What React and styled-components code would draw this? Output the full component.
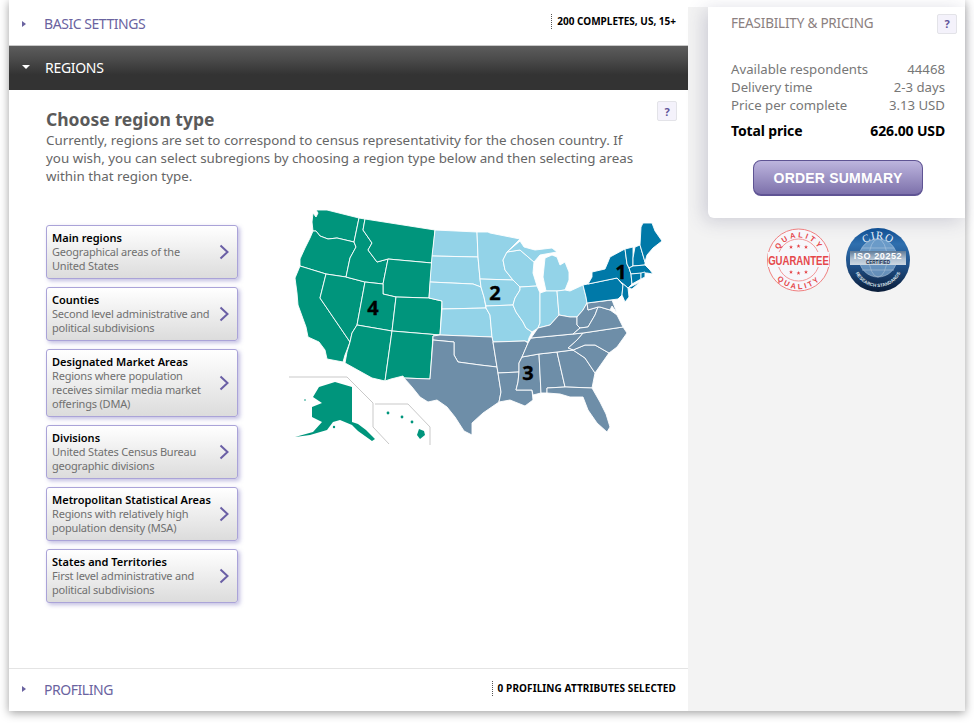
import React from 'react'
import styled, { createGlobalStyle } from 'styled-components'

const FONT = `"Noto Sans", "Open Sans", sans-serif`

const Global = createGlobalStyle`
  html, body { margin: 0; padding: 0; background: #fff; }
  body { font-family: ${FONT}; width: 974px; height: 723px; overflow: hidden; }
  * { box-sizing: border-box; }
`

const Shell = styled.div`
  margin-left: 9px;
  width: 956px;
  height: 711px;
  display: flex;
  background: #f3f3f3;
  box-shadow: 0 2px 9px rgba(0, 0, 0, 0.38);
`
const MainPanel = styled.div`
  width: 679px;
  display: flex;
  flex-direction: column;
  background: #fff;
`
const SidePanel = styled.div`
  width: 277px;
  background: #f3f3f3;
  display: flex;
  flex-direction: column;
  align-items: flex-end;
  border-top: 7px solid #fff;
`
const SectionHead = styled.div`
  height: ${p => p.$h}px;
  flex: none;
  display: flex;
  align-items: center;
  padding: ${p => (p.$ruled ? '0 12px 2px 13px' : '2px 12px 0 13px')};
  border-top: ${p => (p.$ruled ? '1px solid #e4e4e4' : 'none')};
  color: #6a63a0;
  font-size: 14px;
  letter-spacing: -0.45px;
`
const DarkHead = styled.div`
  height: 45px;
  flex: none;
  display: flex;
  align-items: center;
  padding: 0 13px 2px;
  color: #fff;
  font-size: 14px;
  letter-spacing: -0.3px;
  border-top: 1px solid #c9c9c9;
  background: linear-gradient(#5c5c5c 0%, #4b4b4b 30%, #333 65%, #333 100%);
`
const Arrow = styled.span`
  width: 0;
  height: 0;
  margin-right: 18px;
  border-top: 3px solid transparent;
  border-bottom: 3px solid transparent;
  border-left: 4px solid #6a63a0;
`
const ArrowDown = styled.span`
  width: 0;
  height: 0;
  margin-right: 15px;
  border-left: 4px solid transparent;
  border-right: 4px solid transparent;
  border-top: 4px solid #fff;
`
const Status = styled.div`
  margin-left: auto;
  align-self: flex-start;
  margin-top: ${p => p.$top}px;
  padding-left: 5px;
  height: 15px;
  line-height: 14px;
  border-left: 1px dotted #555;
  color: #000;
  font-size: 10px;
  font-weight: 700;
  letter-spacing: ${p => p.$track}px;
`
const Content = styled.div`
  flex: 1;
  padding: 10px 11px 0 37px;
  min-height: 0;
`
const TitleRow = styled.div`
  display: flex;
  justify-content: space-between;
  align-items: flex-start;
  height: 20px;
  margin-top: 1px;
`
const Heading = styled.h2`
  margin: 8px 0 0;
  color: #5a5a5a;
  font-size: 17.5px;
  line-height: 20px;
  font-weight: 700;
`
const Help = styled.div`
  width: 20px;
  height: 20px;
  flex: none;
  display: flex;
  align-items: center;
  justify-content: center;
  border: 1px solid #e3e3e8;
  border-radius: 2px;
  background: #f4f2fb;
  color: #5f5499;
  font-size: 11px;
  font-weight: 700;
  letter-spacing: 0;
`
const Intro = styled.p`
  margin: 10px 0 0;
  width: 596px;
  color: #666;
  font-size: 13.36px;
  line-height: 18px;
`
const ChoiceArea = styled.div`
  display: flex;
  align-items: flex-start;
  margin-top: 20px;
`
const Choices = styled.div`
  width: 192px;
  flex: none;
  padding-top: 20px;
  display: flex;
  flex-direction: column;
  gap: 8px;
`
const Choice = styled.div`
  display: flex;
  align-items: center;
  justify-content: space-between;
  padding: 5px 8px 5px 5px;
  border: 1px solid #aaa3d8;
  border-radius: 3px;
  background: linear-gradient(#fff, #dcdcdc);
  box-shadow: 2px 2px 4px rgba(100, 90, 180, 0.4);
`
const ChoiceText = styled.div`
  font-size: 11px;
  line-height: 14px;
  letter-spacing: -0.2px;
  color: #707070;
  white-space: nowrap;
`
const ChoiceName = styled.div`
  color: #000;
  font-weight: 600;
  letter-spacing: 0;
`
const Chevron = styled.svg`
  width: 10px;
  height: 16px;
  flex: none;
`
const UsMap = styled.svg`
  width: 385px;
  height: 245px;
  flex: none;
  margin-left: 47px;
`
const PriceCard = styled.div`
  width: 257px;
  height: 211px;
  flex: none;
  padding: 7px 20px 0 23px;
  background: #fff;
  border-radius: 0 0 0 6px;
  box-shadow: -4px 3px 18px rgba(70, 70, 110, 0.22);
`
const PriceHead = styled.div`
  display: flex;
  justify-content: space-between;
  align-items: flex-start;
  margin-right: -12px;
  height: 46px;
  color: #8b8080;
  font-size: 13.5px;
  line-height: 18px;
  letter-spacing: -0.2px;
`
const PriceRow = styled.div`
  display: flex;
  justify-content: space-between;
  color: #777;
  font-size: 13.2px;
  line-height: 18px;
`
const TotalRow = styled(PriceRow)`
  margin-top: 8px;
  color: #000;
  font-size: 14px;
  font-weight: 700;
  letter-spacing: -0.15px;
`
const OrderButton = styled.div`
  width: 170px;
  height: 36px;
  margin: 20px auto 0 22px;
  display: flex;
  align-items: center;
  justify-content: center;
  border: 1px solid #5f5494;
  border-bottom-width: 2px;
  border-radius: 8px;
  background: linear-gradient(#bdb5de, #7d71ab);
  color: #fff;
  font-family: "Liberation Sans", Arial, sans-serif;
  font-size: 14px;
  font-weight: 700;
  letter-spacing: 0.2px;
`
const Badges = styled.div`
  align-self: flex-start;
  margin: 9px 0 0 78px;
  display: flex;
  gap: 13px;
`

const west = [
  '313,213 316,217 318,213 316,210 327,210 359,218 354,242 337,238 328,239 320,236 316,231 313,231 312,222',
  '313,231 316,231 320,236 328,239 337,238 354,242 356,247 350,258 346,277 326,274 300,266 300,259 305,248 310,238',
  '300,266 326,274 320,298 350,342 347,350 345,355 343,362 327,359 325,350 319,342 308,337 306,327 302,316 298,305 297,293 295,278',
  '326,274 346,277 365,282 357,325 352,333 350,342 320,298',
  '359,218 365,219 363,230 372,243 368,250 377,262 388,259 383,284 365,282 346,277 350,258 356,247 354,242',
  '365,219 435,230 432,263 388,259 377,262 368,250 372,243 363,230',
  '388,259 432,263 429,298 396,297 383,294 383,284',
  '365,282 383,284 383,294 396,297 392,331 357,325',
  '396,297 429,298 442,301 440,335 392,331',
  '357,325 392,331 385,381 372,378 345,363 347,352 350,342 352,333',
  '392,331 440,335 433,336 430,379 404,378 403,376 391,379 385,381',
]
const midwest = [
  '435,230 477,232 478,257 432,256',
  '432,256 478,257 479,268 480,279 481,287 473,284 430,282',
  '430,282 473,284 481,287 484,297 486,308 442,309 442,301 429,298',
  '442,309 486,308 490,315 492,337 440,335',
  '477,232 488,232 490,233 520,239 507,252 503,260 505,270 513,280 480,279 478,257',
  '480,279 513,280 520,287 520,290 515,298 513,305 486,306 484,297 481,287',
  '486,306 513,305 516,312 523,322 526,328 532,332 529,338 528,342 525,341 493,342 492,337 490,315 486,308',
  '507,252 520,250 534,262 533,273 537,286 520,287 513,280 505,270 503,260',
  '520,287 537,286 540,293 540,323 538,328 532,332 526,328 523,322 516,312 513,305 515,298 520,290',
  '545,258 552,255 557,257 560,265 565,262 569,272 569,280 565,290 557,291 546,291 543,277',
  '507,252 520,241 524,247 535,250 552,248 557,252 540,255 534,262 520,250',
  '540,293 546,291 557,291 559,315 550,325 538,328 540,323',
  '557,291 565,290 570,291 583,285 586,297 587,303 583,310 577,317 570,317 559,315',
]
const south = [
  '433,336 440,335 492,337 493,342 497,367 480,365 458,362 454,355 454,342 433,340',
  '433,340 454,342 454,355 458,362 480,365 497,367 498,373 501,392 499,402 483,413 472,423 472,435 464,431 455,417 447,407 437,400 428,402 420,397 412,387 404,378 430,379',
  '493,342 525,341 528,343 525,350 522,357 519,363 519,372 498,373 497,367',
  '498,373 519,372 518,382 516,390 532,390 533,400 525,406 510,400 499,402 501,392',
  '522,357 539,354 541,393 533,395 532,390 516,390 518,382 519,372 519,363',
  '539,354 557,352 565,387 547,388 547,393 541,393',
  '557,352 573,350 585,358 595,373 592,388 566,387 565,387',
  '547,388 565,387 566,387 592,388 600,402 606,414 610,427 607,432 597,423 588,410 583,397 570,397 560,394 547,393',
  '573,350 585,345 595,345 609,353 595,373 585,358',
  '583,333 623,327 627,333 617,347 609,353 595,345 585,345 573,350 568,348 577,340',
  '522,357 525,350 528,343 531,338 573,334 583,333 577,340 568,348 573,350 557,352 539,354',
  '531,338 538,328 550,325 559,315 570,317 577,317 577,325 580,328 573,334',
  '577,317 583,310 587,303 588,310 598,307 595,315 588,327 580,328 577,325',
  '573,334 580,328 588,327 595,315 598,307 600,307 610,310 617,315 623,327 583,333',
  '587,303 612,300 617,313 612,306 610,310 600,307 598,307 588,310',
]
const northeast = [
  '583,285 617,278 623,285 622,295 618,299 587,303 586,297',
  '588,284 592,277 592,272 605,269 608,262 610,257 623,250 625,249 627,264 629,268 631,274 632,284 628,288 622,283 617,278',
  '622,283 628,288 629,297 625,302 622,295 623,285',
  '625,249 633,247 633,258 633,266 629,268 627,264',
  '635,247 640,245 645,262 645,265 633,266 633,258',
  '640,245 641,227 643,223 652,223 655,231 662,241 653,248 647,255 645,262',
  '629,268 633,266 645,265 650,270 653,274 647,273 631,274',
  '631,274 641,273 641,279 632,284',
  '641,273 645,272 645,277 641,279',
  '628,288 640,282 632,289',
]
const alaska = '319,387 335,382 352,387 352,422 358,424 366,430 375,439 372,441 365,436 358,431 352,425 340,420 333,422 327,430 310,435 295,437 313,432 322,422 312,417 312,407 322,403 313,397'
const star = 'M0 -2 L.6 -.6 L2 -.6 L.9 .3 L1.3 1.7 L0 .9 L-1.3 1.7 L-.9 .3 L-2 -.6 L-.6 -.6 Z'
const starSpots = [[25, 20], [32.5, 19], [40, 20], [25, 45], [32.5, 46], [40, 45]]

const StateGroup = ({ list, fill }) => (
  <g fill={fill} stroke="#fff" strokeWidth="0.9" strokeLinejoin="round">
    {list.map(points => <polygon key={points} points={points} />)}
  </g>
)

const MapNumber = styled.text`
  font-family: ${FONT};
  font-size: 20px;
  font-weight: 700;
  fill: #000;
  stroke: #000;
  stroke-width: 0.3px;
  text-anchor: middle;
`

const RegionMap = () => (
  <UsMap viewBox="285 205 385 245">
    <StateGroup list={west} fill="#00957c" />
    <StateGroup list={midwest} fill="#93d3e8" />
    <StateGroup list={south} fill="#6e8ea8" />
    <StateGroup list={northeast} fill="#0079a8" />
    <polygon points={alaska} fill="#00957c" />
    <g fill="#00957c">
      <circle cx="305" cy="400" r="0.8" />
      <circle cx="334" cy="427" r="1.2" />
      <circle cx="388" cy="413" r="1.4" />
      <circle cx="402" cy="417" r="1.4" />
      <circle cx="412" cy="422" r="1.4" />
      <polygon points="419,429 424,431 425,435 420,439 417,435" />
    </g>
    <g fill="none" stroke="#c9c9c9" strokeWidth="1">
      <polyline points="289,377 347,377 373,403 373,427 389,444" />
      <polyline points="375,404 408,404 430,427 430,445" />
    </g>
    <MapNumber x="621" y="279">1</MapNumber>
    <MapNumber x="495" y="300">2</MapNumber>
    <MapNumber x="528" y="380">3</MapNumber>
    <MapNumber x="373" y="315">4</MapNumber>
  </UsMap>
)

const QualityBadge = () => (
  <svg width="66" height="66" viewBox="0 0 66 66">
    <defs>
      <path id="qTop" d="M10.5 33 A22.5 22.5 0 0 1 55.5 33" />
      <path id="qBottom" d="M4 33 A29 29 0 0 0 62 33" />
    </defs>
    <circle cx="32.5" cy="33" r="31" fill="#f7f7fb" stroke="#f08080" strokeWidth="1" />
    <circle cx="32.5" cy="33" r="21" fill="none" stroke="#f08080" strokeWidth="0.8" />
    <rect x="2" y="25" width="61" height="15" fill="#f7f7fb" />
    {starSpots.map(([x, y]) => (
      <path key={`${x}-${y}`} d={star} transform={`translate(${x} ${y})`} fill="#e5474b" />
    ))}
    <g fill="#e5474b" fontFamily="'Liberation Sans', sans-serif" fontWeight="700" textAnchor="middle">
      <text fontSize="7.5" letterSpacing="2.4"><textPath href="#qTop" startOffset="50%">QUALITY</textPath></text>
      <text fontSize="7.5" letterSpacing="2.4"><textPath href="#qBottom" startOffset="50%">QUALITY</textPath></text>
      <text transform="translate(32.5 37.5) scale(1 1.35)" fontSize="9.6">GUARANTEE</text>
    </g>
  </svg>
)

const CiroBadge = () => (
  <svg width="66" height="66" viewBox="0 0 66 66">
    <defs>
      <linearGradient id="ciroBg" x1="0" y1="0" x2="0" y2="1">
        <stop offset="0" stopColor="#0f4e92" />
        <stop offset="0.25" stopColor="#2f6fae" />
        <stop offset="0.6" stopColor="#1f4f86" />
        <stop offset="1" stopColor="#0a1c38" />
      </linearGradient>
      <linearGradient id="ciroBand" x1="0" y1="0" x2="0" y2="1">
        <stop offset="0" stopColor="#5f7a96" />
        <stop offset="0.55" stopColor="#aebfd0" />
        <stop offset="1" stopColor="#cdd8e2" />
      </linearGradient>
      <path id="ciroLow" d="M8.5 40 A25 25 0 0 0 57.5 40" />
      <path id="ciroTop" d="M12 33 A21 21 0 0 1 54 33" />
    </defs>
    <circle cx="33" cy="33" r="32" fill="url(#ciroBg)" />
    <g fill="none" stroke="#cfe0ef" strokeWidth="0.7" opacity="0.75">
      <circle cx="33" cy="31" r="19" fill="#7faad2" />
      <ellipse cx="33" cy="31" rx="9" ry="19" />
      <line x1="17" y1="21" x2="49" y2="21" />
      <line x1="17" y1="43" x2="49" y2="43" />
    </g>
    <rect x="5" y="24" width="56" height="14" fill="url(#ciroBand)" />
    <g textAnchor="middle" fontFamily="'Liberation Sans', sans-serif" fontWeight="700">
      <text fontSize="11" fill="#eaf2fa" fontFamily="'Liberation Serif', serif" fontWeight="400" letterSpacing="0.6"><textPath href="#ciroTop" startOffset="50%">CIRO</textPath></text>
      <text x="33" y="32" fontSize="9" fill="#fff" letterSpacing="0.6">ISO 20252</text>
      <text x="33" y="37" fontSize="4.6" fill="#12294a">CERTIFIED</text>
      <text fontSize="4.6" fill="#dfe6ee"><textPath href="#ciroLow" startOffset="50%">RESEARCH STANDARDS</textPath></text>
    </g>
  </svg>
)

const choices = [
  ['Main regions', ['Geographical areas of the', 'United States']],
  ['Counties', ['Second level administrative and', 'political subdivisions']],
  ['Designated Market Areas', ['Regions where population', 'receives similar media market', 'offerings (DMA)']],
  ['Divisions', ['United States Census Bureau', 'geographic divisions']],
  ['Metropolitan Statistical Areas', ['Regions with relatively high', 'population density (MSA)']],
  ['States and Territories', ['First level administrative and', 'political subdivisions']],
]

const App = () => (
  <>
    <Global />
    <Shell>
      <MainPanel>
        <SectionHead $h={45}>
          <Arrow />
          BASIC SETTINGS
          <Status $top={12} $track={0}>200 COMPLETES, US, 15+</Status>
        </SectionHead>
        <DarkHead>
          <ArrowDown />
          REGIONS
        </DarkHead>
        <Content>
          <TitleRow>
            <Heading>Choose region type</Heading>
            <Help>?</Help>
          </TitleRow>
          <Intro>
            Currently, regions are set to correspond to census representativity for the chosen country. If you wish, you can select subregions by choosing a region type below and then selecting areas within that region type.
          </Intro>
          <ChoiceArea>
            <Choices>
              {choices.map(([name, lines]) => (
                <Choice key={name}>
                  <ChoiceText>
                    <ChoiceName>{name}</ChoiceName>
                    {lines.map(line => <div key={line}>{line}</div>)}
                  </ChoiceText>
                  <Chevron viewBox="0 0 10 16">
                    <polyline points="1.5,1.5 8.5,8 1.5,14.5" fill="none" stroke="#6a5fa5" strokeWidth="2" />
                  </Chevron>
                </Choice>
              ))}
            </Choices>
            <RegionMap />
          </ChoiceArea>
        </Content>
        <SectionHead $h={43} $ruled>
          <Arrow />
          PROFILING
          <Status $top={12} $track={0.1}>0 PROFILING ATTRIBUTES SELECTED</Status>
        </SectionHead>
      </MainPanel>
      <SidePanel>
        <PriceCard>
          <PriceHead>
            FEASIBILITY &amp; PRICING
            <Help>?</Help>
          </PriceHead>
          <PriceRow><span>Available respondents</span><span>44468</span></PriceRow>
          <PriceRow><span>Delivery time</span><span>2-3 days</span></PriceRow>
          <PriceRow><span>Price per complete</span><span>3.13 USD</span></PriceRow>
          <TotalRow><span>Total price</span><span>626.00 USD</span></TotalRow>
          <OrderButton>ORDER SUMMARY</OrderButton>
        </PriceCard>
        <Badges>
          <QualityBadge />
          <CiroBadge />
        </Badges>
      </SidePanel>
    </Shell>
  </>
)

export default App
